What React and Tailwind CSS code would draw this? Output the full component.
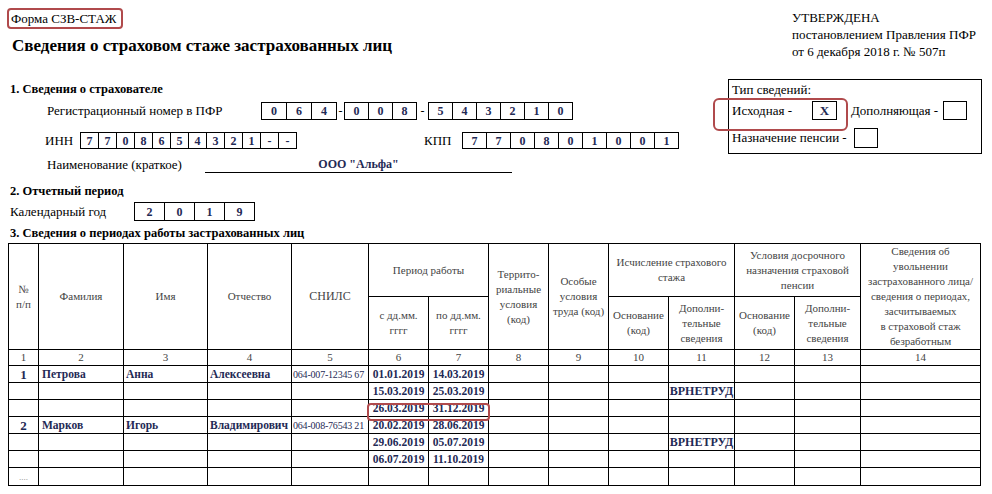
import React from 'react';

const NAVY = 'text-[#1f2a55]';

function Cells({ chars, cell }) {
  return (
    <div className="flex border-r border-black">
      {chars.map((c, i) => (
        <div
          key={i}
          className={`${cell} flex items-center justify-center border-y border-l border-black font-bold text-[12px] ${NAVY}`}
        >
          {c}
        </div>
      ))}
    </div>
  );
}

const rows = [
  { n: '1', f: 'Петрова', i: 'Анна', o: 'Алексеевна', s: '064-007-12345 67', a: '01.01.2019', b: '14.03.2019' },
  { a: '15.03.2019', b: '25.03.2019', extra: 'ВРНЕТРУД' },
  { a: '26.03.2019', b: '31.12.2019' },
  { n: '2', f: 'Марков', i: 'Игорь', o: 'Владимирович', s: '064-008-76543 21', a: '20.02.2019', b: '28.06.2019' },
  { a: '29.06.2019', b: '05.07.2019', extra: 'ВРНЕТРУД' },
  { a: '06.07.2019', b: '11.10.2019' },
  { dots: true },
];

const widths = [30, 85, 84, 84, 77, 60, 60, 60, 60, 60, 66, 60, 66, 120];

export default function App() {
  const th = 'border border-black p-0 font-normal text-[11px] leading-[15px] text-[#444] text-center align-middle';
  const td = 'border border-black p-0 leading-[15px] whitespace-nowrap overflow-hidden';

  return (
    <div className="w-[992px] h-[494px] overflow-hidden bg-white text-black [font-family:'Liberation_Serif',serif] pt-[8px]">
      {/* top: form info + approval */}
      <div className="flex">
        <div className="flex-1 flex flex-col">
          <div className="ml-[7px] w-[116px] h-[21px] border-2 border-[#b04a4c] rounded-[4px] pl-[2px] text-[13px] leading-[17px]">
            Форма СЗВ-СТАЖ
          </div>
          <div className="mt-[7px] ml-[12px] h-[20px] leading-[20px] text-[17px] font-bold">
            Сведения о страховом стаже застрахованных лиц
          </div>
          <div className="mt-[25px] ml-[10px] h-[16px] leading-[16px] text-[12.5px] font-bold">
            1. Сведения о страхователе
          </div>

          {/* reg number */}
          <div className="mt-[5px] flex items-center h-[18px]">
            <div className="ml-[47px] w-[214px] text-[13px]">Регистрационный номер в ПФР</div>
            <Cells chars={['0', '6', '4']} cell="w-[25px] h-[18px]" />
            <div className="w-[7px] text-center text-[12px]">-</div>
            <Cells chars={['0', '0', '8']} cell="w-[24px] h-[18px]" />
            <div className="w-[11px] text-center text-[12px]">-</div>
            <Cells chars={['5', '4', '3', '2', '1', '0']} cell="w-[24px] h-[18px]" />
          </div>

          {/* INN / KPP */}
          <div className="mt-[12px] flex items-center h-[17px]">
            <div className="ml-[45px] w-[35px] text-[13px]">ИНН</div>
            <Cells chars={['7', '7', '0', '8', '6', '5', '4', '3', '2', '1', '-', '-']} cell="w-[18px] h-[17px]" />
            <div className="ml-[127px] w-[38px] text-[13px]">КПП</div>
            <Cells chars={['7', '7', '0', '8', '0', '1', '0', '0', '1']} cell="w-[24px] h-[17px]" />
          </div>

          {/* name */}
          <div className="mt-[8px] flex items-end h-[16px]">
            <div className="ml-[47px] w-[158px] text-[13px] leading-[16px]">Наименование (краткое)</div>
            <div className={`w-[307px] border-b border-black text-center font-bold text-[12px] leading-[15px] ${NAVY}`}>
              ООО "Альфа"
            </div>
          </div>
        </div>

        <div className="w-[254px] mr-[10px] flex flex-col">
          <div className="pl-[64px] pt-[1px] text-[13px] leading-[17px]">
            <div>УТВЕРЖДЕНА</div>
            <div className="whitespace-nowrap">постановлением Правления ПФР</div>
            <div>от 6 декабря 2018 г. № 507п</div>
          </div>

          <div className="relative mt-[19px] h-[75px] border border-black pl-[3px] text-[13px]">
            <div className="h-[15px] leading-[15px] mt-[2px]">Тип сведений:</div>
            <div className="mt-[4px] flex items-center h-[19px]">
              <div className="w-[80px]">Исходная -</div>
              <div className={`w-[25px] h-[19px] border border-black flex items-center justify-center font-bold text-[13px] ${NAVY}`}>X</div>
              <div className="ml-[14px] w-[92px] whitespace-nowrap">Дополняющая -</div>
              <div className="w-[24px] h-[19px] border border-black"></div>
            </div>
            <div className="mt-[8px] flex items-center h-[20px]">
              <div className="w-[122px] whitespace-nowrap">Назначение пенсии -</div>
              <div className="w-[24px] h-[20px] border border-black"></div>
            </div>
            {/* highlight */}
            <div className="absolute left-[-16px] top-[18px] w-[135px] h-[33px] border-2 border-[#b04a4c] rounded-[6px]"></div>
          </div>
        </div>
      </div>

      {/* section 2 */}
      <div className="mt-[10px] ml-[10px] h-[16px] leading-[16px] text-[12.5px] font-bold">2. Отчетный период</div>
      <div className="mt-[3px] flex items-center h-[19px]">
        <div className="ml-[10px] w-[124px] text-[13px]">Календарный год</div>
        <Cells chars={['2', '0', '1', '9']} cell="w-[30px] h-[19px]" />
      </div>
      <div className="mt-[4px] ml-[10px] h-[16px] leading-[16px] text-[12.5px] font-bold">
        3. Сведения о периодах работы застрахованных лиц
      </div>

      {/* section 3 table */}
      <div className="relative ml-[8px] mt-[2px] w-[972px]">
        <table className="table-fixed border-collapse w-[972px]">
          <colgroup>
            {widths.map((w, i) => (
              <col key={i} style={{ width: w }} />
            ))}
          </colgroup>
          <thead>
            <tr className="h-[53px]">
              <th rowSpan={2} className={th}>№<br />п/п</th>
              <th rowSpan={2} className={th}>Фамилия</th>
              <th rowSpan={2} className={th}>Имя</th>
              <th rowSpan={2} className={th}>Отчество</th>
              <th rowSpan={2} className={`${th} text-[12px]`}>СНИЛС</th>
              <th colSpan={2} className={`${th} text-[11.5px]`}>Период работы</th>
              <th rowSpan={2} className={th}>Террито-<br />риальные<br />условия<br />(код)</th>
              <th rowSpan={2} className={th}>Особые<br />условия<br />труда (код)</th>
              <th colSpan={2} className={`${th} text-[11.5px]`}>Исчисление страхового<br />стажа</th>
              <th colSpan={2} className={th}>Условия досрочного<br />назначения страховой<br />пенсии</th>
              <th rowSpan={2} className={`${th} text-[10.5px] leading-[14px]`}>
                Сведения об<br />увольнении<br />застрахованного лица/<br />сведения о периодах,<br />засчитываемых<br />в страховой стаж<br />безработным
              </th>
            </tr>
            <tr className="h-[53px]">
              <th className={th}>с дд.мм.<br />гггг</th>
              <th className={th}>по дд.мм.<br />гггг</th>
              <th className={`${th} text-[11.5px]`}>Основание<br />(код)</th>
              <th className={th}>Дополни-<br />тельные<br />сведения</th>
              <th className={`${th} text-[11.5px]`}>Основание<br />(код)</th>
              <th className={th}>Дополни-<br />тельные<br />сведения</th>
            </tr>
            <tr className="h-[16px]">
              {widths.map((_, i) => (
                <th key={i} className={`${th} text-[11.5px] leading-[14px]`}>{i + 1}</th>
              ))}
            </tr>
          </thead>
          <tbody>
            {rows.map((r, k) => (
              <tr key={k} className="h-[17px]">
                <td className={`${td} text-center font-bold text-[13px] ${NAVY}`}>
                  {r.dots ? <span className="text-[9px] text-[#888] font-normal">....</span> : r.n}
                </td>
                <td className={`${td} pl-[3px] font-bold text-[11.5px] ${NAVY}`}>{r.f}</td>
                <td className={`${td} pl-[2px] font-bold text-[11.5px] ${NAVY}`}>{r.i}</td>
                <td className={`${td} pl-[2px] font-bold text-[11.5px] ${NAVY}`}>{r.o}</td>
                <td className={`${td} pl-[1px] text-[10px] tracking-[-0.2px] ${NAVY}`}>{r.s}</td>
                <td className={`${td} text-center font-bold text-[11.5px] ${NAVY}`}>{r.a}</td>
                <td className={`${td} text-center font-bold text-[11.5px] ${NAVY}`}>{r.b}</td>
                <td className={td}></td>
                <td className={td}></td>
                <td className={td}></td>
                <td className={`${td} text-center font-bold text-[12px] ${NAVY}`}>{r.extra}</td>
                <td className={td}></td>
                <td className={td}></td>
                <td className={td}></td>
              </tr>
            ))}
          </tbody>
        </table>
        {/* highlight of third period */}
        <div className="absolute left-[359px] top-[160px] w-[123px] h-[18px] border-2 border-[#b04a4c] rounded-[4px]"></div>
      </div>
    </div>
  );
}
